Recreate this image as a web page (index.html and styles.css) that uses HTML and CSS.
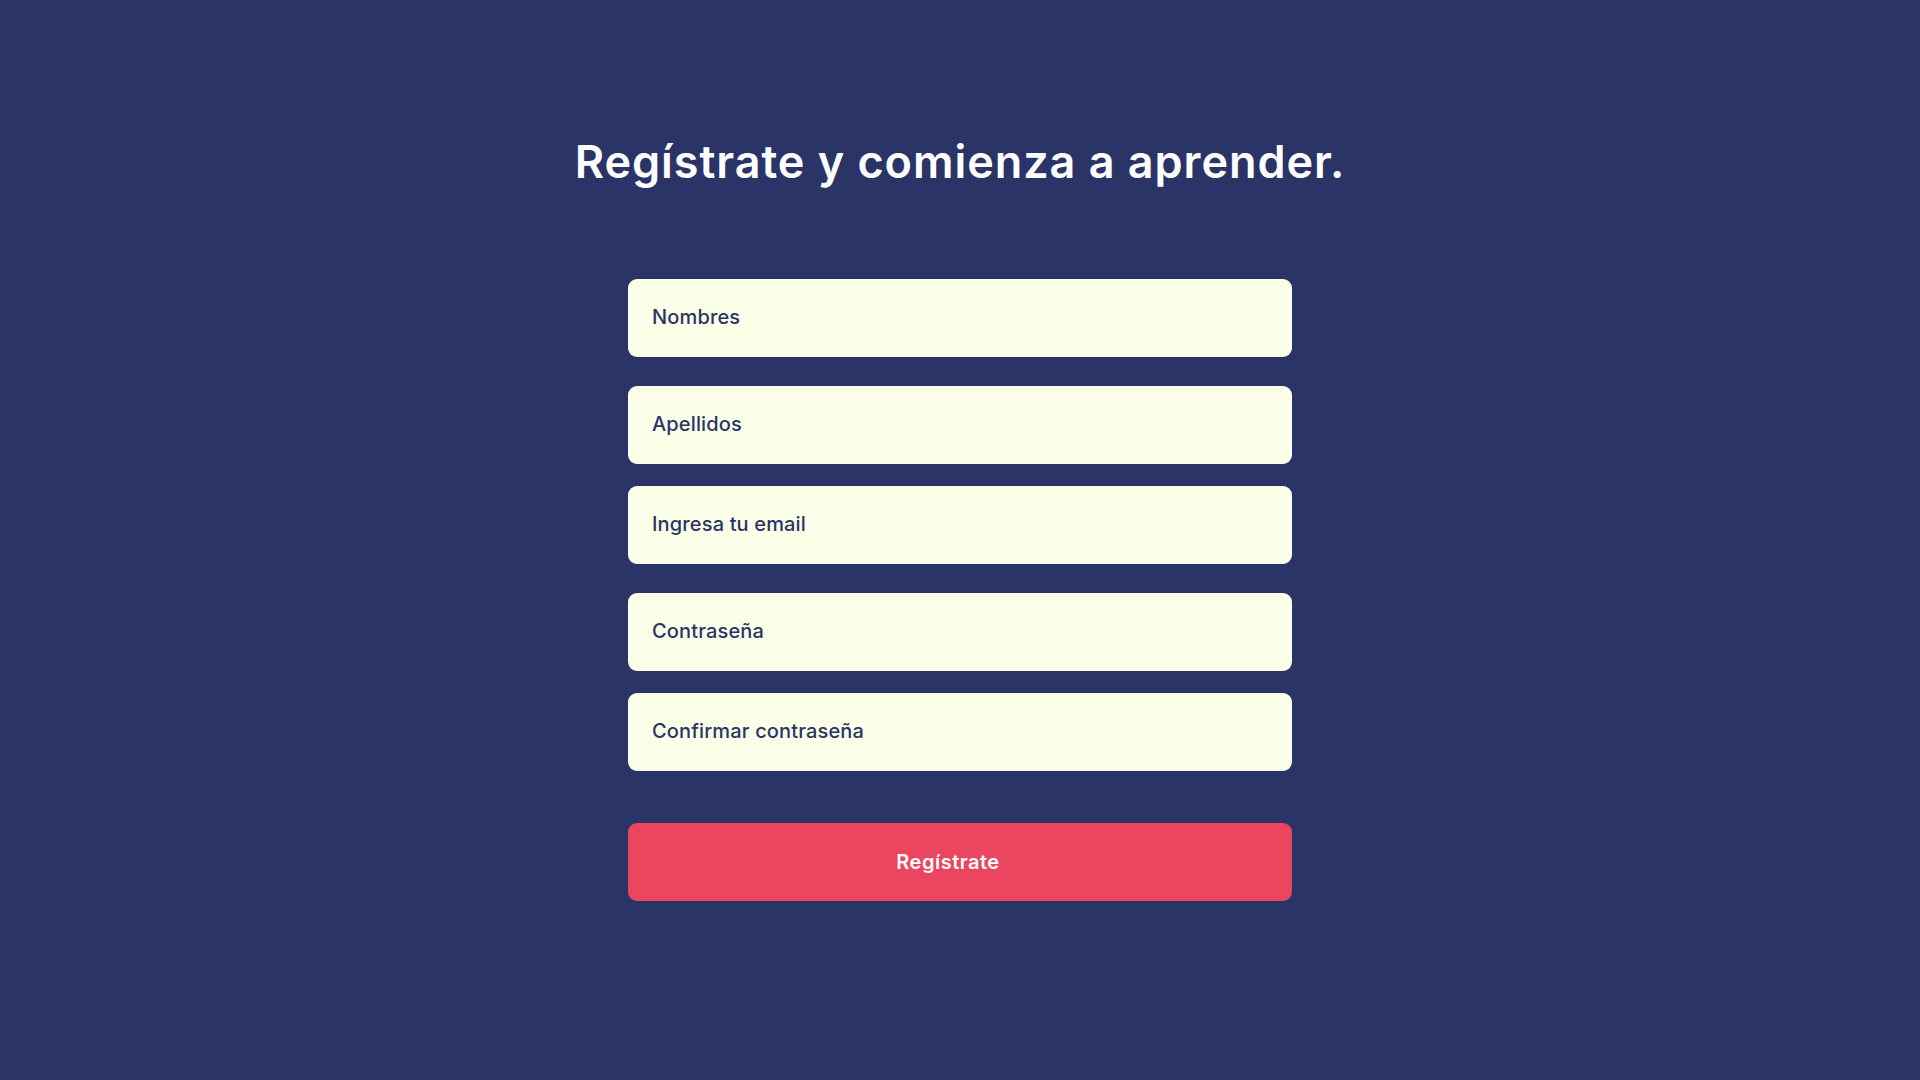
FILE: index.html
```html
<!DOCTYPE html>
<html lang="es">
<head>
<meta charset="utf-8">
<title>Regístrate</title>
<link rel="stylesheet" href="styles.css">
</head>
<body>
<main class="page">
  <h1 class="title">Regístrate y comienza a aprender.</h1>
  <form class="form">
    <div class="field field--first"><span class="label">Nombres</span></div>
    <div class="field field--wide"><span class="label">Apellidos</span></div>
    <div class="field field--narrow"><span class="label">Ingresa tu email</span></div>
    <div class="field field--wide"><span class="label">Contraseña</span></div>
    <div class="field field--narrow"><span class="label">Confirmar contraseña</span></div>
    <button type="button" class="submit">Regístrate</button>
  </form>
</main>
</body>
</html>
```
FILE: styles.css
```css
* { box-sizing: border-box; }
html, body {
  margin: 0;
  padding: 0;
  background: #2b3467;
  height: 100%;
}
body {
  font-family: "Inter", "Noto Sans", sans-serif;
}
.page {
  display: flex;
  flex-direction: column;
  align-items: center;
  padding-top: 129px;
}
.title {
  margin: 0;
  color: #ffffff;
  font-size: 45px;
  font-weight: 600;
  line-height: 66px;
  letter-spacing: 0.95px;
}
.form {
  width: 664px;
  display: flex;
  flex-direction: column;
  margin-top: 84px;
}
.field {
  height: 78px;
  background: #fcffe7;
  border-radius: 9px;
  display: flex;
  align-items: center;
  padding-left: 24px;
  padding-bottom: 2px;
}
.field--wide { margin-top: 29px; }
.field--narrow { margin-top: 22px; }
.label {
  color: #2b3467;
  font-size: 20px;
  font-weight: 500;
  letter-spacing: 0.15px;
}
.submit {
  margin-top: 52px;
  height: 78px;
  border: none;
  border-radius: 9px;
  background: #eb455f;
  color: #ffffff;
  font-family: "Inter", "Noto Sans", sans-serif;
  font-size: 20px;
  font-weight: 600;
  letter-spacing: 0.5px;
  padding: 0 24px 0 0;
  cursor: pointer;
}
```
